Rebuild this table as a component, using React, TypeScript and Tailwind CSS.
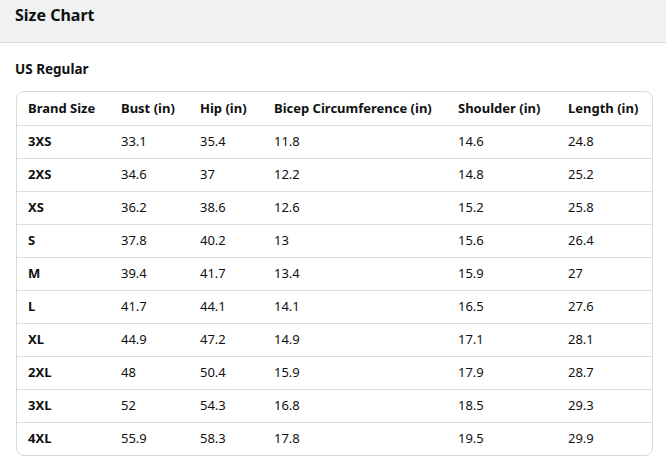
import React from "react";

const rows = [
  ["3XS", "33.1", "35.4", "11.8", "14.6", "24.8"],
  ["2XS", "34.6", "37", "12.2", "14.8", "25.2"],
  ["XS", "36.2", "38.6", "12.6", "15.2", "25.8"],
  ["S", "37.8", "40.2", "13", "15.6", "26.4"],
  ["M", "39.4", "41.7", "13.4", "15.9", "27"],
  ["L", "41.7", "44.1", "14.1", "16.5", "27.6"],
  ["XL", "44.9", "47.2", "14.9", "17.1", "28.1"],
  ["2XL", "48", "50.4", "15.9", "17.9", "28.7"],
  ["3XL", "52", "54.3", "16.8", "18.5", "29.3"],
  ["4XL", "55.9", "58.3", "17.8", "19.5", "29.9"],
];

const headers = [
  "Brand Size",
  "Bust (in)",
  "Hip (in)",
  "Bicep Circumference (in)",
  "Shoulder (in)",
  "Length (in)",
];

const cols = "grid grid-cols-[93px_79px_74px_184px_110px_1fr]";

export default function App() {
  return (
    <div
      className="w-[666px] h-[473px] bg-white text-[#0f1111] overflow-hidden"
      style={{ fontFamily: '"Noto Sans", "Open Sans", sans-serif' }}
    >
      <div className="h-[43px] bg-[#f0f2f2] border-b border-[#d5d9d9] px-[15px] flex items-start pt-[3px]">
        <h1 className="text-[16px] font-bold leading-[24px]">Size Chart</h1>
      </div>
      <div className="px-[16px] pt-[16px]">
        <h2 className="text-[13.5px] font-bold leading-[20px] -ml-[1px]">US Regular</h2>
        <div className="mt-[12px] w-[637px] border border-[#d5d9d9] rounded-[8px] overflow-hidden text-[13px]">
          <div className={`${cols} h-[33px] items-center font-bold`}>
            {headers.map((h) => (
              <div key={h} className="pl-[11px] whitespace-nowrap">
                {h}
              </div>
            ))}
          </div>
          {rows.map((r) => (
            <div
              key={r[0]}
              className={`${cols} h-[33px] items-center border-t border-[#dddddd]`}
            >
              {r.map((c, i) => (
                <div
                  key={i}
                  className={i === 0 ? "pl-[11px] font-bold" : "pl-[11px]"}
                >
                  {c}
                </div>
              ))}
            </div>
          ))}
        </div>
      </div>
    </div>
  );
}
